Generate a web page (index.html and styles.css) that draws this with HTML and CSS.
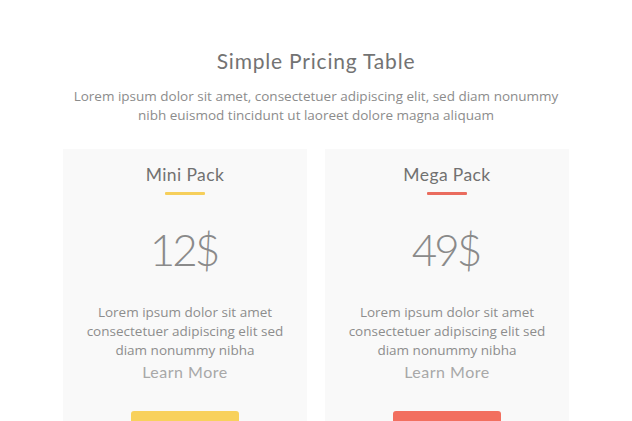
FILE: index.html
```html
<!DOCTYPE html>
<html>
<head>
<meta charset="utf-8">
<link rel="stylesheet" href="styles.css">
</head>
<body>
<section class="pricing">
  <h1 class="title">Simple Pricing Table</h1>
  <p class="intro">Lorem ipsum dolor sit amet, consectetuer adipiscing elit, sed diam nonummy<br>nibh euismod tincidunt ut laoreet dolore magna aliquam</p>
  <div class="cards">
    <div class="card">
      <h2 class="card-title">Mini Pack</h2>
      <div class="bar bar-yellow"></div>
      <div class="price">12$</div>
      <p class="desc">Lorem ipsum dolor sit amet<br>consectetuer adipiscing elit sed<br>diam nonummy nibha</p>
      <div class="more">Learn More</div>
      <div class="btn btn-yellow"></div>
    </div>
    <div class="card">
      <h2 class="card-title">Mega Pack</h2>
      <div class="bar bar-red"></div>
      <div class="price">49$</div>
      <p class="desc">Lorem ipsum dolor sit amet<br>consectetuer adipiscing elit sed<br>diam nonummy nibha</p>
      <div class="more">Learn More</div>
      <div class="btn btn-red"></div>
    </div>
  </div>
</section>
</body>
</html>
```
FILE: styles.css
```css
html, body {
  margin: 0;
  padding: 0;
  background: #ffffff;
  overflow: hidden;
}
.pricing {
  display: flex;
  flex-direction: column;
  align-items: center;
  padding-top: 48px;
  font-family: "Open Sans", "Liberation Sans", sans-serif;
}
.title {
  margin: 0;
  font-family: "Lato", "Noto Sans", sans-serif;
  font-weight: 400;
  font-size: 21px;
  line-height: 26px;
  color: #737373;
  letter-spacing: 0.8px;
}
.intro {
  margin: 13px 0 0;
  font-size: 13.5px;
  line-height: 19px;
  color: #8c8c8c;
  text-align: center;
}
.cards {
  margin-top: 24px;
  display: flex;
  gap: 18px;
  width: 506px;
}
.card {
  flex: 1;
  background: #f9f9f9;
  display: flex;
  flex-direction: column;
  align-items: center;
  padding-top: 14px;
  height: 300px;
}
.card-title {
  margin: 0;
  font-family: "Lato", "Noto Sans", sans-serif;
  font-weight: 400;
  font-size: 17.5px;
  line-height: 24px;
  color: #717171;
  letter-spacing: 0.4px;
}
.bar {
  margin-top: 5px;
  width: 40px;
  height: 3px;
  border-radius: 1px;
}
.bar-yellow { background: #f6cf5b; }
.bar-red { background: #ea6c5e; }
.price {
  margin-top: 27px;
  font-family: "Lato", "Noto Sans", sans-serif;
  font-weight: 300;
  font-size: 44px;
  line-height: 54px;
  color: #8a8a8a;
  letter-spacing: -3px;
  padding-right: 3px;
}
.desc {
  margin: 27px 0 0;
  font-size: 13.5px;
  line-height: 19px;
  color: #8d8d8d;
  text-align: center;
}
.more {
  margin-top: 1px;
  font-family: "Lato", "Noto Sans", sans-serif;
  font-size: 16px;
  line-height: 22px;
  color: #a8a8a8;
  letter-spacing: 0.5px;
}
.btn {
  margin-top: 28px;
  width: 108px;
  height: 40px;
  border-radius: 3px;
}
.btn-yellow { background: #f8d15c; }
.btn-red { background: #f26f5f; }
```
